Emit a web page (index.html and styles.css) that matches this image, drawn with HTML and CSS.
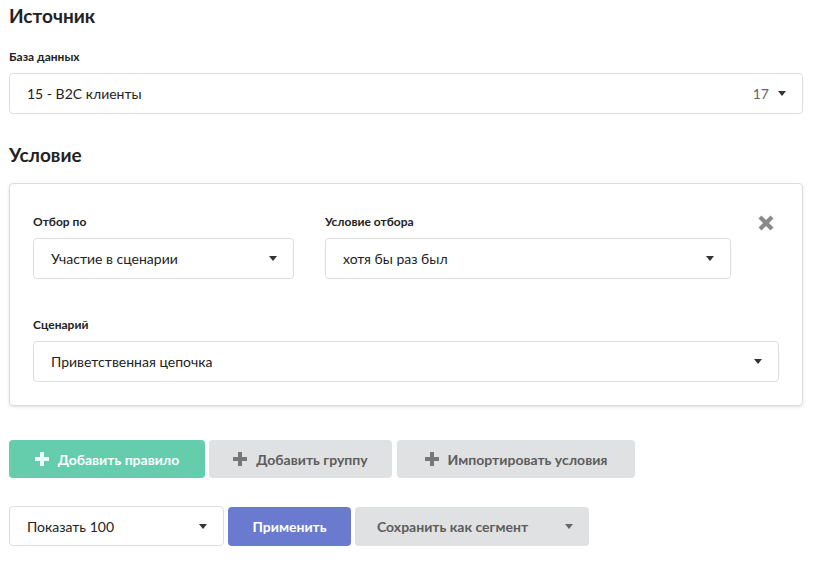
FILE: index.html
```html
<!DOCTYPE html>
<html lang="ru">
<head>
<meta charset="utf-8">
<title>Сегмент</title>
<link rel="stylesheet" href="styles.css">
</head>
<body>
<div class="page">
  <h2 class="section-title">Источник</h2>
  <div class="field">
    <label class="field-label">База данных</label>
    <div class="select">
      <span class="select-text">15 - B2C клиенты</span>
      <span class="select-count">17</span>
      <span class="caret"></span>
    </div>
  </div>

  <h2 class="section-title cond-title">Условие</h2>
  <div class="card">
    <div class="card-row">
      <div class="field col-a">
        <label class="field-label">Отбор по</label>
        <div class="select">
          <span class="select-text">Участие в сценарии</span>
          <span class="caret"></span>
        </div>
      </div>
      <div class="field col-b">
        <label class="field-label">Условие отбора</label>
        <div class="select">
          <span class="select-text">хотя бы раз был</span>
          <span class="caret"></span>
        </div>
      </div>
      <div class="remove">
        <svg width="18" height="18" viewBox="0 0 18 18" aria-hidden="true">
          <path d="M3 3 L15 15 M15 3 L3 15" stroke="#8a8a8a" stroke-width="4.2" stroke-linecap="butt" fill="none"/>
        </svg>
      </div>
    </div>
    <div class="field scen">
      <label class="field-label">Сценарий</label>
      <div class="select">
        <span class="select-text">Приветственная цепочка</span>
        <span class="caret"></span>
      </div>
    </div>
  </div>

  <div class="actions">
    <button class="btn btn-green"><span class="plus"></span>Добавить правило</button>
    <button class="btn btn-grey"><span class="plus"></span>Добавить группу</button>
    <button class="btn btn-grey"><span class="plus"></span>Импортировать условия</button>
  </div>

  <div class="footer">
    <div class="select small">
      <span class="select-text">Показать 100</span>
      <span class="caret"></span>
    </div>
    <button class="btn btn-blue">Применить</button>
    <button class="btn btn-grey btn-save"><span class="save-text">Сохранить как сегмент</span><span class="caret dark"></span></button>
  </div>
</div>
</body>
</html>
```
FILE: styles.css
```css
* { box-sizing: border-box; }
html, body { margin: 0; padding: 0; background: #fff; }
body {
  font-family: "Lato", "Noto Sans", sans-serif;
  color: #222;
  font-size: 14px;
}
.page {
  width: 814px;
  padding: 4px 11px 0 9px;
}
.section-title {
  margin: 0;
  font-size: 19px;
  line-height: 24px;
  font-weight: 700;
  color: #222;
}
.cond-title { margin-top: 29px; }
.field { display: flex; flex-direction: column; }
.field-label {
  font-size: 12px;
  font-weight: 700;
  line-height: 16px;
  margin: 21px 0 8px;
  color: #222;
}
.select {
  height: 41px;
  flex: none;
  border: 1px solid #dedede;
  border-radius: 4px;
  background: #fff;
  display: flex;
  align-items: center;
  padding: 0 16px 0 17px;
  font-size: 14px;
  color: #222;
  white-space: nowrap;
}
.select-text { flex: 1; }
.select-count { color: #666; margin-right: 9px; }
.caret {
  width: 0; height: 0;
  border-left: 4.5px solid transparent;
  border-right: 4.5px solid transparent;
  border-top: 5px solid #333;
}
.caret.dark { border-top-color: #666; }

.card {
  margin-top: 16px;
  border: 1px solid #dcdcdc;
  border-radius: 4px;
  box-shadow: 0 1px 3px rgba(0,0,0,0.12);
  padding: 9px 23px 23px 23px;
}
.card-row { display: flex; align-items: flex-start; }
.col-a { width: 261px; }
.col-b { width: 406px; margin-left: 31px; }
.remove { margin: 21px 0 0 26px; width: 18px; height: 18px; display: flex; }
.scen .field-label { margin-top: 38px; }

.actions {
  display: flex;
  gap: 4px;
  margin-top: 34px;
}
.btn {
  font-family: inherit;
  font-size: 14px;
  font-weight: 700;
  height: 38px;
  border: none;
  border-radius: 4px;
  display: inline-flex;
  align-items: center;
  justify-content: center;
  padding: 0 12px;
  white-space: nowrap;
  cursor: pointer;
}
.plus {
  position: relative;
  width: 14px; height: 14px;
  margin-right: 9px;
  flex: none;
}
.plus::before, .plus::after {
  content: "";
  position: absolute;
  background: currentColor;
}
.plus::before { left: 5px; top: 0; width: 4px; height: 14px; }
.plus::after { left: 0; top: 5px; width: 14px; height: 4px; }
.btn-green { background: #65cdac; color: #fff; width: 196px; }
.btn-green .plus { color: #eafaf4; }
.btn-grey { background: #e0e1e2; color: #5c5c5c; }
.btn-grey .plus { color: #777; }
.actions .btn-grey:nth-child(2) { width: 183px; }
.actions .btn-grey:nth-child(3) { width: 238px; margin-left: 1px; }

.footer {
  display: flex;
  gap: 4px;
  margin-top: 28px;
  align-items: center;
}
.select.small { width: 215px; height: 40px; }
.btn-blue { background: #6a7bcf; color: #fff; height: 39px; width: 123px; }
.btn-save { height: 39px; width: 234px; padding: 0 16px 0 22px; justify-content: flex-start; }
.save-text { flex: 1; text-align: left; }
```
